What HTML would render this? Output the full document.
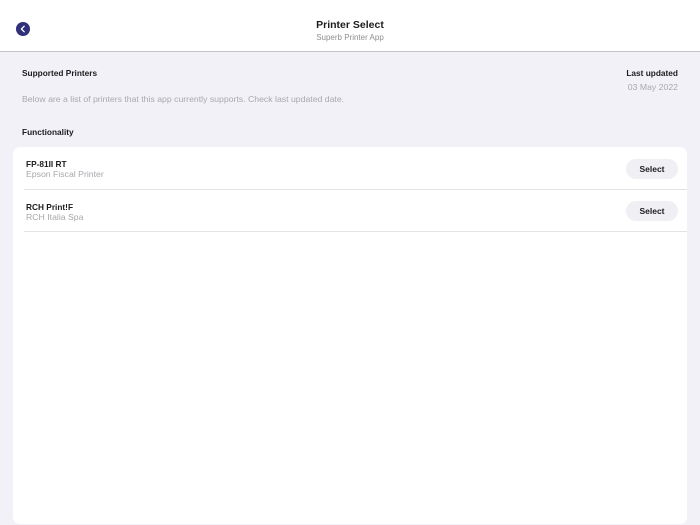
<!DOCTYPE html>
<html><head><meta charset="utf-8"><style>
*{margin:0;padding:0;box-sizing:border-box}
body{width:700px;height:525px;background:#f2f1f7;font-family:"Liberation Sans",sans-serif;position:relative;overflow:hidden;color:#1c1c1e}
.hdr{position:absolute;left:0;top:0;width:700px;height:52px;background:#fff;border-bottom:1px solid #c4c4c8}
.back{position:absolute;left:16px;top:22px;width:14px;height:14px;border-radius:50%;background:#2f2f7a}
.title{position:absolute;left:0;width:700px;text-align:center;top:19px;font-size:10.5px;font-weight:bold}
.sub{position:absolute;left:0;width:700px;text-align:center;top:33px;font-size:8px;color:#8e8e93}
.t{position:absolute;font-size:8.3px;font-weight:bold}
.g{position:absolute;font-size:8.7px;color:#a8a8ad}
.card{position:absolute;left:13px;top:147px;width:674px;height:377px;background:#fff;border-radius:7px}
.sep{position:absolute;left:11px;right:0;height:1px;background:#e3e3e6}
.btn{position:absolute;left:613px;width:52px;height:20px;border-radius:10px;background:#efeff4;font-size:8.5px;font-weight:bold;text-align:center;line-height:20px}
</style></head><body>
<div class="hdr">
<div class="back"><svg width="14" height="14" viewBox="0 0 14 14"><path d="M8.2 4.2L5.4 7l2.8 2.8" stroke="#fff" stroke-width="1.3" fill="none" stroke-linecap="round" stroke-linejoin="round"/></svg></div>
<div class="title">Printer Select</div>
<div class="sub">Superb Printer App</div>
</div>
<div class="t" style="left:22px;top:67.5px">Supported Printers</div>
<div class="g" style="left:22px;top:94px">Below are a list of printers that this app currently supports. Check last updated date.</div>
<div class="t" style="right:22px;top:67.5px">Last updated</div>
<div class="g" style="right:22px;top:82px">03 May 2022</div>
<div class="t" style="left:22px;top:127px">Functionality</div>
<div class="card">
<div class="t" style="left:13px;top:11.5px">FP-81II RT</div>
<div class="g" style="left:13px;top:22px">Epson Fiscal Printer</div>
<div class="btn" style="top:12px">Select</div>
<div class="sep" style="top:42px"></div>
<div class="t" style="left:13px;top:54.5px">RCH Print!F</div>
<div class="g" style="left:13px;top:65px">RCH Italia Spa</div>
<div class="btn" style="top:54px">Select</div>
<div class="sep" style="top:84px"></div>
</div>
</body></html>
